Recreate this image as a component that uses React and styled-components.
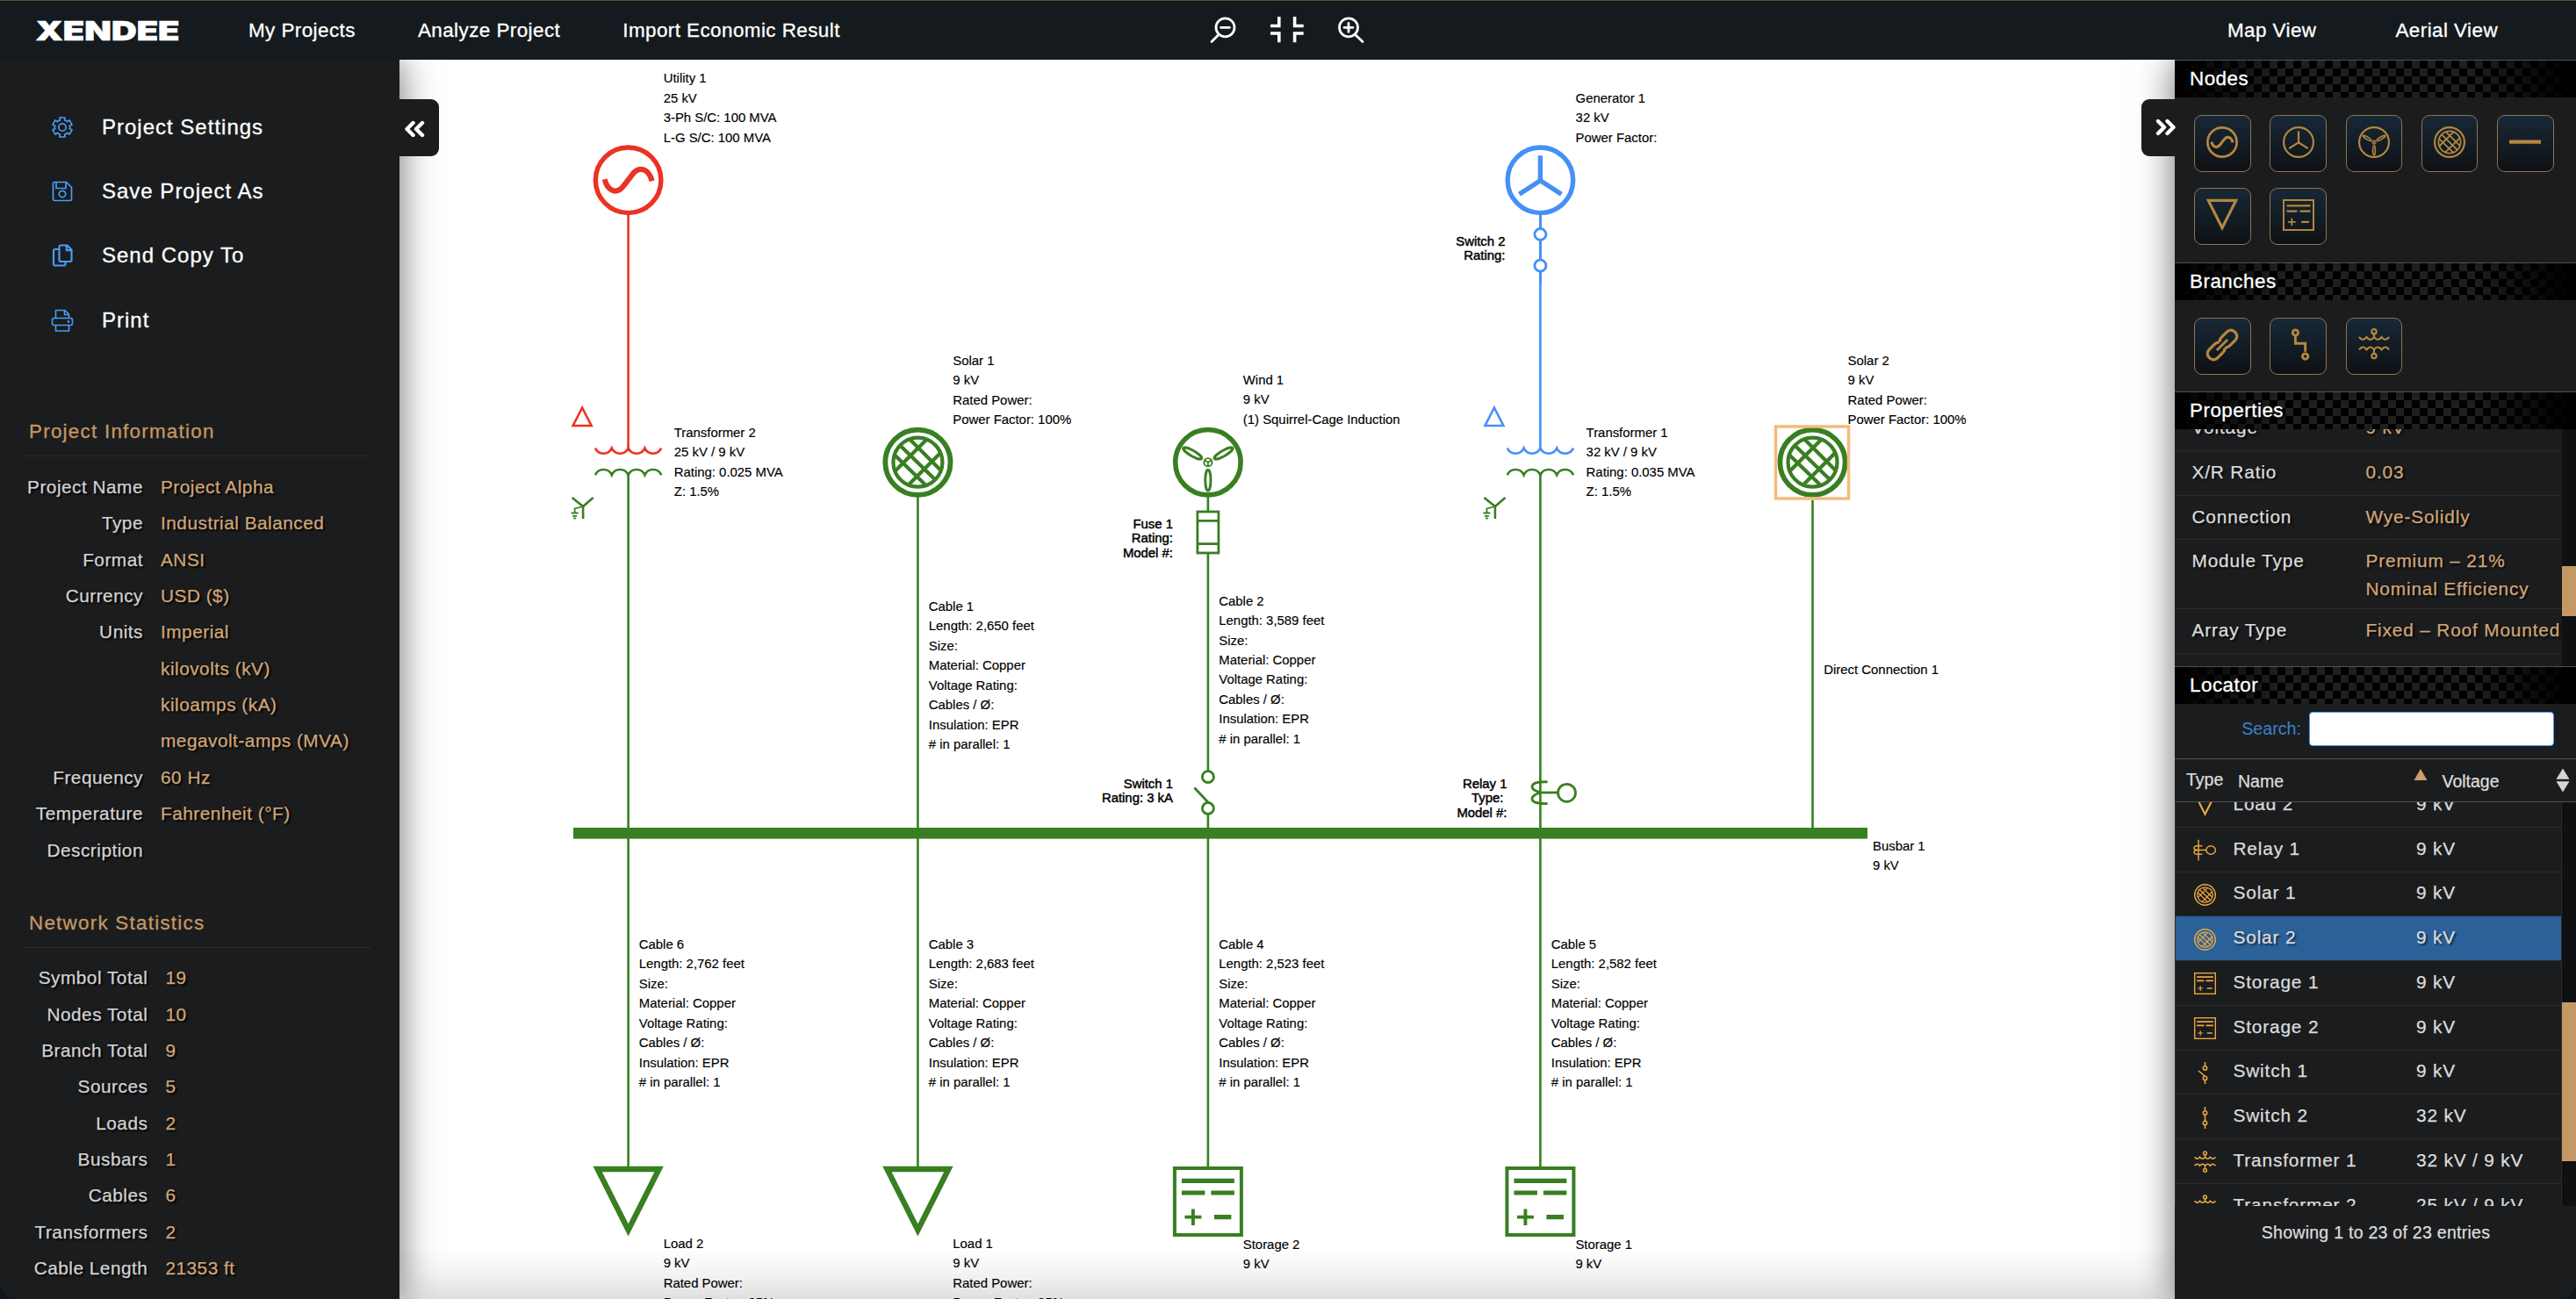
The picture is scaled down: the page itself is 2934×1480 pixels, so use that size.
import React from "react";
import styled, { createGlobalStyle, css } from "styled-components";

const GREEN = "#387f22";
const RED = "#eb3323";
const BLUE = "#4590f7";
const GOLD = "#b3873f";
const AMBER = "#e9a842";

const Global = createGlobalStyle`
  * { box-sizing: border-box; }
  body { margin: 0; background: #0b1722; overflow: hidden; }
`;

const Window = styled.div`
  width: 2934px;
  height: 1480px;
  display: flex;
  flex-direction: column;
  overflow: hidden;
  border-radius: 0 0 20px 20px;
  font-family: "Liberation Sans", Arial, sans-serif;
  color: #fff;
  background: #1b1c1e;
`;

/* ---------- Top bar ---------- */

const TopBar = styled.header`
  height: 68px;
  flex: none;
  display: grid;
  grid-template-columns: 1348px 1fr auto;
  align-items: center;
  background: #141a1d;
  border-top: 1px solid #5f4c31;
  position: relative;
  z-index: 3;
`;

const TopLeft = styled.div`
  display: flex;
  align-items: center;
  padding-left: 40px;
`;

const LogoArt = styled.svg`
  display: block;
  width: 166px;
  height: 46px;
  margin-right: 77px;
  overflow: visible;
`;

const TopLink = styled.a`
  font-size: 22.4px;
  letter-spacing: 0.45px;
  line-height: 30px;
  white-space: nowrap;
  color: #fff;
  margin-right: ${(p) => p.$gap || 0}px;
  -webkit-text-stroke: 0.3px #fff;
`;

const ZoomTools = styled.div`
  display: flex;
  align-items: center;
  gap: 33px;
  padding-left: 25px;
`;

const ToolIcon = styled.svg`
  display: block;
  width: 40px;
  height: 34px;
  margin-top: -3px;
  fill: none;
  stroke: #fff;
  stroke-linecap: ${(p) => (p.$butt ? "butt" : "round")};
`;

const TopRight = styled.div`
  display: flex;
  padding-right: 89px;
`;

/* ---------- Shell ---------- */

const Body = styled.div`
  flex: 1;
  min-height: 0;
  display: grid;
  grid-template-columns: 455px 1fr 457px;
`;

const panelShade = css`
  background: #1b1c1e;
  box-shadow: 0 0 40px rgba(0, 0, 0, 0.58);
  position: relative;
  z-index: 2;
`;

const Sidebar = styled.aside`
  ${panelShade}
  padding-top: 40px;
`;

const RightPanel = styled.aside`
  ${panelShade}
  display: flex;
  flex-direction: column;
`;

const PanelHandle = styled.button`
  position: absolute;
  top: 45px;
  ${(p) => (p.$side === "left" ? "right: -45px; width: 46px;" : "left: -38px; width: 39px;")}
  height: 65px;
  border: 0;
  background: #1b1c1e;
  border-radius: ${(p) => (p.$side === "left" ? "0 9px 9px 0" : "9px 0 0 9px")};
  display: flex;
  align-items: center;
  justify-content: ${(p) => (p.$side === "left" ? "flex-start" : "flex-end")};
  padding: ${(p) => (p.$side === "left" ? "3px 0 0 7px" : "0 0 2px 0")};
`;

const Chevrons = styled.svg`
  width: 24px;
  height: 20px;
  fill: none;
  stroke: #fff;
  stroke-width: 4.4;
  stroke-linecap: round;
  stroke-linejoin: round;
`;

/* ---------- Left sidebar ---------- */

const MenuItem = styled.a`
  height: 73.4px;
  display: flex;
  align-items: center;
  padding-left: 57px;
  gap: 31px;
  font-size: 24px;
  letter-spacing: 1px;
  white-space: nowrap;
  -webkit-text-stroke: 0.3px #fff;
`;

const MenuIcon = styled.svg`
  width: 28px;
  height: 28px;
  flex: none;
  fill: none;
  stroke: #4a9cf0;
  stroke-width: ${(p) => p.$w || 1.6};
  stroke-linejoin: round;
`;

const SectionTitle = styled.h2`
  margin: ${(p) => p.$top}px 32px ${(p) => p.$bottom}px 28px;
  padding-left: 5px;
  height: 54px;
  line-height: 52px;
  border-bottom: 1px solid #302a25;
  font-size: 22.4px;
  font-weight: 400;
  letter-spacing: 1.25px;
  color: #c49763;
  white-space: nowrap;
  -webkit-text-stroke: 0.3px #c49763;
`;

const InfoRow = styled.div`
  display: grid;
  grid-template-columns: ${(p) => p.$label}px 1fr;
  column-gap: 20px;
  height: 41.36px;
  line-height: 41.36px;
  font-size: 20.8px;
  letter-spacing: 0.5px;
  white-space: nowrap;
  text-shadow: 2px 2px 2px #000;
  -webkit-text-stroke: 0.25px currentColor;
`;

const InfoLabel = styled.span`
  color: #d2d2d2;
  text-align: right;
`;

const InfoValue = styled.span`
  color: #d0a676;
`;

/* ---------- Right panel ---------- */

const CarbonBar = styled.h3`
  margin: 0;
  height: 43px;
  flex: none;
  border-top: 1px solid #505152;
  padding-left: 17px;
  line-height: 41px;
  font-size: 22.4px;
  font-weight: 400;
  letter-spacing: 0.5px;
  text-shadow: 2px 2px 3px #000;
  -webkit-text-stroke: 0.3px #fff;
  background:
    linear-gradient(90deg, #000 0, rgba(0, 0, 0, 0) 26%, rgba(0, 0, 0, 0) 74%, #000 99%),
    conic-gradient(#000 0 25%, #1f1f1f 0 50%, #000 0 75%, #1f1f1f 0) 0 0 / 18px 18px;
`;

const Palette = styled.div`
  display: grid;
  grid-template-columns: repeat(5, 86.25px);
  grid-auto-rows: 83px;
  padding: 20px 0 0 22px;
  height: ${(p) => p.$h}px;
  flex: none;
`;

const PaletteButton = styled.button`
  width: 64.5px;
  height: 65px;
  padding: 0 0 3px;
  display: flex;
  align-items: center;
  justify-content: center;
  border: 1px solid #8f7350;
  border-radius: 9px;
  background: linear-gradient(#182837, #0e1114);
`;

const SymbolIcon = styled.svg`
  display: block;
  width: ${(p) => p.$s}px;
  height: ${(p) => p.$s}px;
  fill: none;
  stroke: currentColor;
  color: ${(p) => p.$c};
  overflow: visible;
`;

const ScrollArea = styled.div`
  height: ${(p) => p.$h}px;
  flex: none;
  display: grid;
  grid-template-columns: 1fr 16px;
  overflow: hidden;
`;

const ScrollContent = styled.div`
  margin-top: ${(p) => -p.$offset}px;
  min-width: 0;
`;

const Track = styled.div`
  background: #0f1012;
  padding-top: ${(p) => p.$start}px;
`;

const Thumb = styled.div`
  height: ${(p) => p.$h}px;
  background: #c49864;
`;

const PropertyRow = styled.div`
  display: grid;
  grid-template-columns: 198px 1fr;
  min-height: 50.8px;
  padding: 8px 0 6px 19.5px;
  border-bottom: 1px solid #2a2b2d;
  font-size: 20.8px;
  letter-spacing: 0.85px;
  line-height: 32px;
  white-space: nowrap;
  text-shadow: 2px 2px 2px rgba(0, 0, 0, 0.8);
  -webkit-text-stroke: 0.25px currentColor;
`;

const PropertyName = styled.span`
  color: #dcdcdc;
`;

const PropertyValue = styled.span`
  color: #d0a676;
`;

const SearchRow = styled.label`
  height: 62px;
  flex: none;
  display: flex;
  align-items: center;
  justify-content: flex-end;
  gap: 9px;
  padding: 0 25px 5px 0;
  font-size: 19.7px;
  color: #3c82c9;
`;

const SearchInput = styled.input`
  width: 279px;
  height: 39px;
  border: 1px solid #4a9af0;
  border-radius: 4px;
  background: #fff;
  outline: 0;
`;

const TableHead = styled.div`
  height: 50px;
  flex: none;
  display: grid;
  grid-template-columns: 72px 200px 32.5px 129.5px 1fr;
  align-items: center;
  border-top: 1px solid #505152;
  border-bottom: 1px solid #505152;
  font-size: 19.5px;
  color: #dcdcdc;
  -webkit-text-stroke: 0.25px currentColor;
`;

const HeadCell = styled.span`
  padding: ${(p) => p.$pad || "3px 0 0 0"};
`;

const SortMark = styled.svg`
  display: block;
  width: 16px;
  height: 28px;
`;

const TableRow = styled.div`
  height: 50.78px;
  display: grid;
  grid-template-columns: 65.5px 208.5px 1fr;
  align-items: center;
  border: 1px solid #2a2b2d;
  border-top: 0;
  font-size: 20.8px;
  letter-spacing: 0.85px;
  white-space: nowrap;
  color: #dcdcdc;
  background: ${(p) => (p.$selected ? "#2b6199" : "transparent")};
  text-shadow: ${(p) => (p.$selected ? "2px 2px 2px rgba(0,0,0,.6)" : "none")};
  -webkit-text-stroke: 0.25px currentColor;
`;

const TextCell = styled.span`
  padding-bottom: 2px;
`;

const TypeCell = styled.span`
  padding: 2px 0 0 21px;
`;

const Summary = styled.p`
  margin: 18px 0 0;
  padding-left: 1px;
  text-align: center;
  font-size: 19.5px;
  letter-spacing: 0.27px;
  line-height: 24px;
  color: #dcdcdc;
  -webkit-text-stroke: 0.25px currentColor;
`;

/* ---------- Diagram canvas ---------- */

const Canvas = styled.main`
  position: relative;
  overflow: hidden;
  background: linear-gradient(#fff 0 95.8%, #f3f3f3 98%, #dfdfdf 100%);
`;

const Drawing = styled.svg`
  display: block;
  width: 2022px;
  height: 1412px;
  fill: none;
`;

const Label = styled.div`
  position: absolute;
  left: ${(p) => p.$x - 455}px;
  top: ${(p) => p.$y - 68 - 16.4}px;
  font-size: 14.9px;
  line-height: 22.47px;
  color: #000;
  white-space: nowrap;
  -webkit-text-stroke: 0.15px #000;
`;

const SideLabel = styled.div`
  position: absolute;
  right: ${(p) => 2477 - p.$x}px;
  top: ${(p) => p.$y - 68 - 13.5}px;
  font-size: 14.9px;
  line-height: 16.5px;
  text-align: right;
  color: #000;
  white-space: pre;
  -webkit-text-stroke: 0.45px #000;
`;

/* ---------- Symbol drawings, on an 80 x 80 grid centred at 0,0 ---------- */

function SolarShape({ w = 5.8, inner = 4.2 }) {
  return (
    <>
      <circle r={40 - w / 2} strokeWidth={w} />
      <circle r="28" strokeWidth={inner} />
      <path
        strokeWidth={inner}
        d="M-9 -26L26 9M-20 -19L20 20M-26 -8L9 26M10 -26L-26 10M26 -11L-11 26"
      />
    </>
  );
}

function WindShape({ w = 5.6, thin = 2.9 }) {
  return (
    <>
      <circle r={40 - w / 2} strokeWidth={w} />
      <circle r="4.6" strokeWidth={thin * 0.65} />
      <path d="M0 0V4.5M0 0L-4 -2.4M0 0L4 -2.4" strokeWidth={thin * 0.6} />
      {[0, 120, 240].map((a) => (
        <ellipse key={a} cy="20.4" rx="3.1" ry="12" strokeWidth={thin} transform={`rotate(${a})`} />
      ))}
    </>
  );
}

function UtilityShape({ w = 5.4 }) {
  return (
    <>
      <circle r={40 - w / 2} strokeWidth={w} />
      <path d="M-27 -1C-23 14 -12 16 -5 6L5 -7C12 -16 23 -14 27 1" strokeWidth={w * 1.15} />
    </>
  );
}

function GeneratorShape({ w = 5.4 }) {
  return (
    <>
      <circle r={40 - w / 2} strokeWidth={w} />
      <path d="M0 -28V1M-24 16L0 0.5L24 16" strokeWidth={w} />
    </>
  );
}

function LoadShape({ w = 6.4 }) {
  return <path d="M-35 -37H35L0 32.5Z" strokeWidth={w} />;
}

function StorageShape({ w = 4, bar = 5.2 }) {
  return (
    <>
      <rect x={-40 + w / 2} y={-40 + w / 2} width={80 - w} height={80 - w} strokeWidth={w} />
      <path d="M-30 -23.6H30M-30 -10H-3.5M3.5 -10H30M7 17.6H26.5" strokeWidth={bar} />
      <path d="M-26.5 17.6H-7.5M-17 8.5V27" strokeWidth={bar * 0.75} />
    </>
  );
}

function TransformerShape({ w = 5 }) {
  return (
    <>
      <path
        strokeWidth={w}
        d="M-38 -20Q-28 -7 -19 -20Q-9 -7 0 -20Q9 -7 19 -20Q28 -7 38 -20M0 -20V-30M-38 12Q-28 -1 -19 12Q-9 -1 0 12Q9 -1 19 12Q28 -1 38 12M0 12V22"
      />
      <circle cy="-34" r="6" strokeWidth={w} />
      <circle cy="28" r="6" strokeWidth={w} />
    </>
  );
}

function RelayShape({ w = 3.4 }) {
  return (
    <path
      strokeWidth={w}
      d="M-24 -38V38M-10 -15H-30C-44 -15 -44 0 -28 0C-44 0 -44 15 -30 15H-10M-28 0H4M4 0A17 15 0 0 1 38 0A17 15 0 0 1 4 0"
    />
  );
}

function SwitchShape({ open }) {
  return (
    <g strokeWidth="5">
      <path d={open ? "M0 -40V-25M0 25V40M0 12L-24 -8" : "M0 -40V-25M0 25V40M0 -11V11"} />
      <circle cy="-18" r="7" />
      <circle cy="19" r="7" />
    </g>
  );
}

function LinkShape() {
  return (
    <g transform="rotate(-45)" strokeWidth="7.5">
      <path d="M0 10C-4 14 -8 15 -13 15H-31C-51 15 -51 -15 -31 -15H-13C-8 -15 -4 -14 0 -10" />
      <path d="M0 -10C4 -14 8 -15 13 -15H31C51 -15 51 15 31 15H13C8 15 4 14 0 10" />
      <path d="M-19 0H19" strokeWidth="6.5" />
    </g>
  );
}

function CableShape() {
  return (
    <g strokeWidth="6.5">
      <path d="M-8 -24V-4H17V17" />
      <circle cx="-8" cy="-31" r="7" />
      <circle cx="17" cy="29" r="7" />
    </g>
  );
}

const glyphs = {
  utility: <UtilityShape w={6} />,
  generator: <GeneratorShape w={4.8} />,
  wind: <WindShape w={4.8} thin={3.6} />,
  solar: <SolarShape w={4.8} inner={4} />,
  busbar: <path d="M-40 -1H40" strokeWidth="9.5" />,
  load: <LoadShape w={7} />,
  storage: <StorageShape w={4.4} bar={5} />,
  link: <LinkShape />,
  cable: <CableShape />,
  transformer: <TransformerShape w={4.8} />,
  relay: <RelayShape w={4.6} />,
  switchOpen: <SwitchShape open />,
  switchClosed: <SwitchShape />,
};

function Glyph({ name, size, color }) {
  return (
    <SymbolIcon viewBox="-40 -40 80 80" $s={size} $c={color}>
      {glyphs[name]}
    </SymbolIcon>
  );
}

/* ---------- Network drawing ---------- */

const scallops = (sweep) => Array(4).fill(`a10.2 10.2 0 0 ${sweep} 18.8 0`).join("");

function TransformerOnLine({ x, color }) {
  return (
    <g transform={`translate(${x} 0)`} strokeWidth="2.6">
      <path stroke={color} d={`M-37.600 510.500${scallops(0)}`} />
      <path stroke={GREEN} d={`M-37.600 541.200${scallops(1)}`} />
      <path stroke={color} d="M-63 485H-42L-52.500 464.500Z" />
      <path stroke={GREEN} d="M-64 567L-51.500 577L-40 567M-51.500 576V591" />
      <path stroke={GREEN} strokeWidth="1.8" d="M-51.500 577L-61 579.500V584.500M-65 584.500H-57M-63.500 587.800H-58.500M-62.300 590.500H-59.700" />
    </g>
  );
}

const columns = { a: 715.6, b: 1045.4, c: 1375.9, d: 1754.4, e: 2064.5 };

function Network() {
  const { a, b, c, d, e } = columns;
  return (
    <Drawing viewBox="455 68 2022 1412">
      <g strokeWidth="2.6">
        <path stroke={RED} d={`M${a} 245V511`} />
        <path stroke={BLUE} d={`M${d} 245V260M${d} 274V296M${d} 310V511`} />
        <path
          stroke={GREEN}
          d={`M${a} 541V1330M${b} 566V1330M${c} 566V582M${c} 631V878M${c} 928V1330M${d} 541V1330M${e} 570V944`}
        />
      </g>
      <rect x="653" y="943" width="1474" height="12.600" fill={GREEN} />

      <g stroke={RED} transform={`translate(${a} 205.300)`}><UtilityShape /></g>
      <g stroke={BLUE} transform={`translate(${d} 205.300)`}><GeneratorShape /></g>
      <g stroke={BLUE} strokeWidth="2.800">
        <path d={`M${d} 245V260.500M${d} 273.500V296M${d} 309V323`} />
        <circle cx={d} cy="267" r="6.500" />
        <circle cx={d} cy="302.700" r="6.500" />
      </g>
      <TransformerOnLine x={a} color={RED} />
      <TransformerOnLine x={d} color={BLUE} />

      <g stroke={GREEN} transform={`translate(${b} 526.700)`}><SolarShape /></g>
      <g stroke={GREEN} transform={`translate(${c} 526.700)`}><WindShape /></g>
      <g stroke={GREEN} transform={`translate(${e} 526.700)`}><SolarShape /></g>
      <rect x="2022.500" y="486" width="83" height="82" stroke="#f2bc7e" strokeWidth="3.500" />

      <g stroke={GREEN} strokeWidth="2.800">
        <rect x={c - 12} y="583" width="24" height="47" />
        <path d={`M${c - 12} 593.400H${c + 12}M${c - 12} 619.600H${c + 12}`} />
        <circle cx={c} cy="885.200" r="6.500" />
        <circle cx={c} cy="921" r="6.500" />
        <path d={`M${c - 15.5} 897.500L${c} 914`} />
      </g>

      <g stroke={GREEN} strokeWidth="2.800">
        <path d="M1762.600 890.800C1752 890.500 1745.500 892 1745 896C1744.500 900 1750 901 1754 903C1750 905 1744.500 906.500 1745 910.500C1745.500 914.500 1752 915.800 1762.600 915.500" />
        <path d="M1752 903H1774" />
        <circle cx="1784.500" cy="903.300" r="10" />
      </g>

      {[a, b].map((x) => (
        <g key={x} stroke={GREEN} transform={`translate(${x} 1369)`}><LoadShape /></g>
      ))}
      {[c, d].map((x) => (
        <g key={x} stroke={GREEN} transform={`translate(${x} 1369)`}><StorageShape /></g>
      ))}
    </Drawing>
  );
}

const cable = (name, feet) => [
  name,
  `Length: ${feet} feet`,
  "Size:",
  "Material: Copper",
  "Voltage Rating:",
  "Cables / Ø:",
  "Insulation: EPR",
  "# in parallel: 1",
];

const labels = [
  [755.7, 94.5, ["Utility 1", "25 kV", "3-Ph S/C: 100 MVA", "L-G S/C: 100 MVA"]],
  [1794.6, 117, ["Generator 1", "32 kV", "Power Factor:"]],
  [767.8, 498, ["Transformer 2", "25 kV / 9 kV", "Rating: 0.025 MVA", "Z: 1.5%"]],
  [1806.6, 498, ["Transformer 1", "32 kV / 9 kV", "Rating: 0.035 MVA", "Z: 1.5%"]],
  [1085.3, 416, ["Solar 1", "9 kV", "Rated Power:", "Power Factor: 100%"]],
  [2104.6, 416, ["Solar 2", "9 kV", "Rated Power:", "Power Factor: 100%"]],
  [1415.8, 438.3, ["Wind 1", "9 kV", "(1) Squirrel-Cage Induction"]],
  [1057.8, 696.3, cable("Cable 1", "2,650")],
  [1388.3, 690, cable("Cable 2", "3,589")],
  [2077.3, 768.4, ["Direct Connection 1"]],
  [2133, 969, ["Busbar 1", "9 kV"]],
  [727.8, 1081.3, cable("Cable 6", "2,762")],
  [1057.8, 1081.3, cable("Cable 3", "2,683")],
  [1388.3, 1081.3, cable("Cable 4", "2,523")],
  [1766.8, 1081.3, cable("Cable 5", "2,582")],
  [755.7, 1422, ["Load 2", "9 kV", "Rated Power:", "Power Factor: 95%"]],
  [1085.3, 1422, ["Load 1", "9 kV", "Rated Power:", "Power Factor: 95%"]],
  [1415.8, 1423, ["Storage 2", "9 kV"]],
  [1794.4, 1423, ["Storage 1", "9 kV"]],
];

const sideLabels = [
  [1714.5, 280, ["Switch 2", "Rating:"]],
  [1336, 602, ["Fuse 1", "Rating:", "Model #:"]],
  [1336, 898.3, ["Switch 1", "Rating: 3 kA"]],
  [1716.5, 898.3, ["Relay 1", "Type: ", "Model #:"]],
];

/* ---------- Content ---------- */

const gearPoints = (() => {
  const pts = [];
  for (let i = 0; i < 6; i++) {
    const base = i * 60 - 90;
    [[-25, 8.7], [-19, 8.3], [-15, 11.4], [15, 11.4], [19, 8.3], [25, 8.7]].forEach(([da, r]) => {
      const t = ((base + da) * Math.PI) / 180;
      pts.push(`${(14 + r * Math.cos(t)).toFixed(2)},${(14 + r * Math.sin(t)).toFixed(2)}`);
    });
  }
  return pts.join(" ");
})();

const menu = [
  ["Project Settings", 1.7, <><polygon points={gearPoints} /><circle cx="14" cy="14" r="4.200" /></>],
  ["Save Project As", 1.7, <><path d="M5 3.500H18.500L24.500 9.500V23Q24.500 24.500 23 24.500H5Q3.500 24.500 3.500 23V5Q3.500 3.500 5 3.500Z" /><path d="M7 3.500V10.500H18V3.500" /><circle cx="14" cy="17" r="3.700" /></>],
  ["Send Copy To", 2.2, <><path d="M12.500 2.500H19.500L24.500 7.500V19Q24.500 21 22.500 21H12.500Q10.500 21 10.500 19V4.500Q10.500 2.500 12.500 2.500ZM18.800 2.500V8.200H24.500" /><path d="M10.500 7H6Q4 7 4 9V23.500Q4 25.500 6 25.500H15.500Q17.500 25.500 17.500 23.500V21" /></>],
  ["Print", 1.6, <><path d="M6.500 11.500V2.500H17L21.500 7V11.500M16.500 2.500V7.500H21.500" /><path d="M4.500 11.500H23.500Q25.500 11.500 25.500 14V17Q25.500 19.500 23.500 19.500H4.500Q2.500 19.500 2.500 17V14Q2.500 11.500 4.500 11.500Z" /><path d="M6.500 19.500V26H21.500V19.500" /><circle cx="21" cy="15.500" r="0.600" /></>],
];

const projectInfo = [
  ["Project Name", "Project Alpha"],
  ["Type", "Industrial Balanced"],
  ["Format", "ANSI"],
  ["Currency", "USD ($)"],
  ["Units", "Imperial"],
  ["", "kilovolts (kV)"],
  ["", "kiloamps (kA)"],
  ["", "megavolt-amps (MVA)"],
  ["Frequency", "60 Hz"],
  ["Temperature", "Fahrenheit (°F)"],
  ["Description", ""],
];

const networkStats = [
  ["Symbol Total", "19"],
  ["Nodes Total", "10"],
  ["Branch Total", "9"],
  ["Sources", "5"],
  ["Loads", "2"],
  ["Busbars", "1"],
  ["Cables", "6"],
  ["Transformers", "2"],
  ["Cable Length", "21353 ft"],
];

const nodeTools = ["utility", "generator", "wind", "solar", "busbar", "load", "storage"];
const branchTools = ["link", "cable", "transformer"];

const properties = [
  ["Voltage", ["9 kV"]],
  ["X/R Ratio", ["0.03"]],
  ["Connection", ["Wye-Solidly"]],
  ["Module Type", ["Premium – 21%", "Nominal Efficiency"]],
  ["Array Type", ["Fixed – Roof Mounted"]],
];

const locator = [
  ["load", "Load 2", "9 kV"],
  ["relay", "Relay 1", "9 kV"],
  ["solar", "Solar 1", "9 kV"],
  ["solar", "Solar 2", "9 kV", true],
  ["storage", "Storage 1", "9 kV"],
  ["storage", "Storage 2", "9 kV"],
  ["switchOpen", "Switch 1", "9 kV"],
  ["switchClosed", "Switch 2", "32 kV"],
  ["transformer", "Transformer 1", "32 kV / 9 kV"],
  ["transformer", "Transformer 2", "25 kV / 9 kV"],
];

const Lines = ({ items }) => items.map((t, i) => <div key={i}>{t}</div>);

function InfoList({ rows, label }) {
  return rows.map(([k, v], i) => (
    <InfoRow key={i} $label={label}>
      <InfoLabel>{k}</InfoLabel>
      <InfoValue>{v}</InfoValue>
    </InfoRow>
  ));
}

export default function App() {
  return (
    <Window>
      <Global />
      <TopBar>
        <TopLeft>
          <LogoArt viewBox="0 -8 166 46">
            <text
              x="0.500"
              y="26.200"
              fill="#fff"
              stroke="#fff"
              strokeWidth="0.600"
              fontFamily="Inter, sans-serif"
              fontWeight="900"
              fontSize="30.500"
              textLength="164"
              lengthAdjust="spacingAndGlyphs"
            >
              XENDEE
            </text>
          </LogoArt>
          <TopLink $gap={71}>My Projects</TopLink>
          <TopLink $gap={71}>Analyze Project</TopLink>
          <TopLink>Import Economic Result</TopLink>
        </TopLeft>
        <ZoomTools>
          <ToolIcon viewBox="1373 15 40 34" strokeWidth="2.800">
            <circle cx="1395.500" cy="30.300" r="10.500" />
            <path d="M1388 38.500L1380 46.500M1390.500 30.300H1400.500" />
          </ToolIcon>
          <ToolIcon viewBox="1446 15 40 34" strokeWidth="3.600" $butt>
            <path d="M1447 28.500H1456.800V18M1484.700 28.500H1474.600V18M1447 37H1456.800V47.300M1484.700 37H1474.600V47.300" />
          </ToolIcon>
          <ToolIcon viewBox="1519 15 40 34" strokeWidth="2.800">
            <circle cx="1536" cy="30.300" r="10.500" />
            <path d="M1543.500 38.500L1552 46.500M1531 30.300H1541M1536 25.300V35.300" />
          </ToolIcon>
        </ZoomTools>
        <TopRight>
          <TopLink $gap={90}>Map View</TopLink>
          <TopLink>Aerial View</TopLink>
        </TopRight>
      </TopBar>

      <Body>
        <Sidebar>
          <PanelHandle $side="left">
            <Chevrons viewBox="0 0 24 20"><path d="M9.500 3L2.500 10L9.500 17M20 3L13 10L20 17" /></Chevrons>
          </PanelHandle>
          <nav>
            {menu.map(([text, w, art]) => (
              <MenuItem key={text}>
                <MenuIcon viewBox="0 0 28 28" $w={w}>{art}</MenuIcon>
                {text}
              </MenuItem>
            ))}
          </nav>
          <SectionTitle $top={64} $bottom={14.4}>Project Information</SectionTitle>
          <InfoList rows={projectInfo} label={163} />
          <SectionTitle $top={36.8} $bottom={13.6}>Network Statistics</SectionTitle>
          <InfoList rows={networkStats} label={168.4} />
        </Sidebar>

        <Canvas>
          <Network />
          {labels.map(([x, y, items], i) => (
            <Label key={i} $x={x} $y={y}><Lines items={items} /></Label>
          ))}
          {sideLabels.map(([x, y, items], i) => (
            <SideLabel key={i} $x={x} $y={y}><Lines items={items} /></SideLabel>
          ))}
        </Canvas>

        <RightPanel>
          <PanelHandle $side="right">
            <Chevrons viewBox="0 0 24 20"><path d="M4 3L11 10L4 17M14.500 3L21.500 10L14.500 17" /></Chevrons>
          </PanelHandle>
          <CarbonBar>Nodes</CarbonBar>
          <Palette $h={188}>
            {nodeTools.map((n) => (
              <PaletteButton key={n}><Glyph name={n} size={36} color={GOLD} /></PaletteButton>
            ))}
          </Palette>
          <CarbonBar>Branches</CarbonBar>
          <Palette $h={104}>
            {branchTools.map((n) => (
              <PaletteButton key={n}><Glyph name={n} size={36} color={GOLD} /></PaletteButton>
            ))}
          </Palette>
          <CarbonBar>Properties</CarbonBar>
          <ScrollArea $h={270}>
            <ScrollContent $offset={26}>
              {properties.map(([k, v]) => (
                <PropertyRow key={k}>
                  <PropertyName>{k}</PropertyName>
                  <PropertyValue><Lines items={v} /></PropertyValue>
                </PropertyRow>
              ))}
            </ScrollContent>
            <Track $start={156}><Thumb $h={57} /></Track>
          </ScrollArea>
          <CarbonBar>Locator</CarbonBar>
          <SearchRow>
            Search:
            <SearchInput />
          </SearchRow>
          <TableHead>
            <HeadCell $pad="0 0 1px 13px">Type</HeadCell>
            <HeadCell>Name</HeadCell>
            <SortMark viewBox="0 0 16 28"><path d="M8 1L15.500 14H0.500Z" fill="#cf9d70" /></SortMark>
            <HeadCell>Voltage</HeadCell>
            <SortMark viewBox="0 0 16 28"><path d="M8 0.500L15.500 12.800H0.500ZM8 27.500L15.500 15.200H0.500Z" fill="#d6d6d6" /></SortMark>
          </TableHead>
          <ScrollArea $h={460}>
            <ScrollContent $offset={22}>
              {locator.map(([icon, name, volts, selected]) => (
                <TableRow key={name} $selected={selected}>
                  <TypeCell><Glyph name={icon} size={25} color={AMBER} /></TypeCell>
                  <TextCell>{name}</TextCell>
                  <TextCell>{volts}</TextCell>
                </TableRow>
              ))}
            </ScrollContent>
            <Track $start={228}><Thumb $h={181} /></Track>
          </ScrollArea>
          <Summary>Showing 1 to 23 of 23 entries</Summary>
        </RightPanel>
      </Body>
    </Window>
  );
}
